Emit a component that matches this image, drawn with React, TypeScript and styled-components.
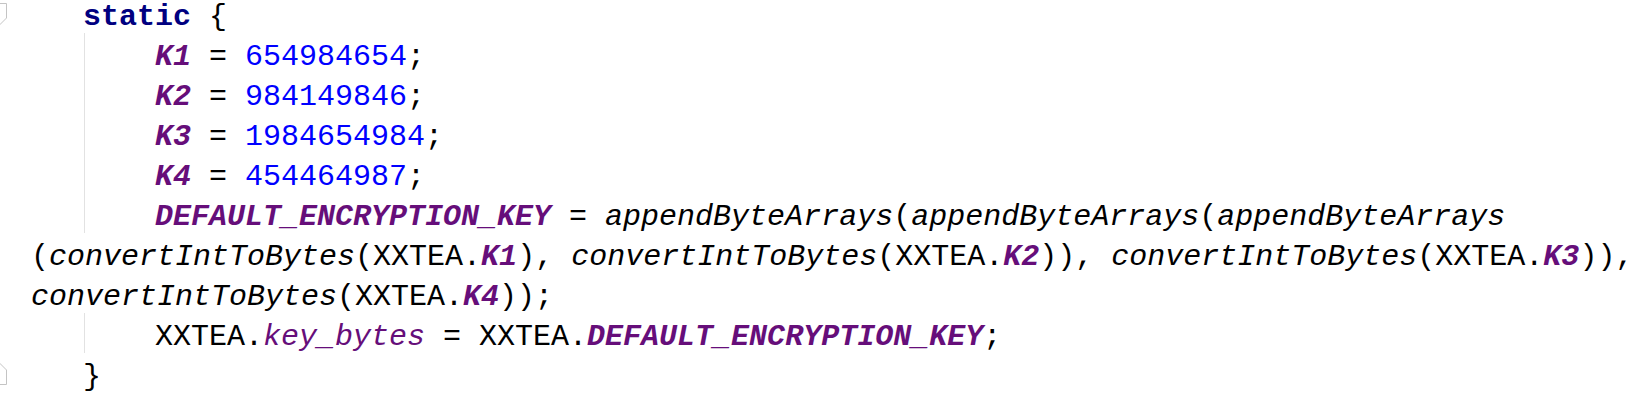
import React from "react";
import styled, { createGlobalStyle } from "styled-components";

const Global = createGlobalStyle`
  html, body { margin: 0; padding: 0; background: #ffffff; }
  body { overflow: hidden; }
`;

const Editor = styled.div`
  display: flex;
  flex-direction: column;
  margin-top: -3px;
  font-family: "Liberation Mono", "Courier New", monospace;
  font-size: 30px;
  line-height: 40px;
  color: #000000;
  background: #ffffff;
`;

const Line = styled.div<{ $guide?: boolean }>`
  position: relative;
  display: flex;
  height: 40px;
  white-space: pre;
  ${(p) =>
    p.$guide &&
    `&::before {
      content: "";
      position: absolute;
      left: 84px;
      top: -4px;
      height: 40px;
      width: 1px;
      background: #e2e2e2;
    }`}
`;

const Gutter = styled.div`
  width: 8px;
  flex: none;
  overflow: hidden;
  position: relative;
`;

const FoldIcon = styled.svg<{ $top: number }>`
  position: absolute;
  left: -7px;
  top: ${(p) => p.$top}px;
`;

const Code = styled.div<{ $indent: number }>`
  padding-left: ${(p) => p.$indent}px;
`;

const Kw = styled.span`
  color: #000080;
  font-weight: bold;
`;
const Const = styled.span`
  color: #660e7a;
  font-weight: bold;
  font-style: italic;
`;
const Field = styled.span`
  color: #660e7a;
  font-style: italic;
`;
const Num = styled.span`
  color: #0000ff;
`;
const Call = styled.span`
  font-style: italic;
`;

const BASE = 75;
const INNER = 147;
const WRAP = 23;

const FoldStart = () => (
  <FoldIcon $top={6} width="14" height="22" viewBox="0 0 14 22">
    <path d="M0.5 0.5 H13.5 V15 L7 21.5 L0.5 15 Z" fill="#ffffff" stroke="#c4c4c4" strokeWidth="1" />
  </FoldIcon>
);

const FoldEnd = () => (
  <FoldIcon $top={6} width="14" height="22" viewBox="0 0 14 22">
    <path d="M7 0.5 L13.5 7 V21.5 H0.5 V7 Z" fill="#ffffff" stroke="#c4c4c4" strokeWidth="1" />
  </FoldIcon>
);

export default function App() {
  return (
    <>
      <Global />
      <Editor>
        <Line>
          <Gutter>
            <FoldStart />
          </Gutter>
          <Code $indent={BASE}>
            <Kw>static</Kw> {"{"}
          </Code>
        </Line>
        <Line $guide>
          <Gutter />
          <Code $indent={INNER}>
            <Const>K1</Const> = <Num>654984654</Num>;
          </Code>
        </Line>
        <Line $guide>
          <Gutter />
          <Code $indent={INNER}>
            <Const>K2</Const> = <Num>984149846</Num>;
          </Code>
        </Line>
        <Line $guide>
          <Gutter />
          <Code $indent={INNER}>
            <Const>K3</Const> = <Num>1984654984</Num>;
          </Code>
        </Line>
        <Line $guide>
          <Gutter />
          <Code $indent={INNER}>
            <Const>K4</Const> = <Num>454464987</Num>;
          </Code>
        </Line>
        <Line $guide>
          <Gutter />
          <Code $indent={INNER}>
            <Const>DEFAULT_ENCRYPTION_KEY</Const> = <Call>appendByteArrays</Call>(
            <Call>appendByteArrays</Call>(<Call>appendByteArrays</Call>
          </Code>
        </Line>
        <Line>
          <Gutter />
          <Code $indent={WRAP}>
            (<Call>convertIntToBytes</Call>(XXTEA.<Const>K1</Const>), <Call>convertIntToBytes</Call>(XXTEA.
            <Const>K2</Const>)), <Call>convertIntToBytes</Call>(XXTEA.<Const>K3</Const>)),
          </Code>
        </Line>
        <Line>
          <Gutter />
          <Code $indent={WRAP}>
            <Call>convertIntToBytes</Call>(XXTEA.<Const>K4</Const>));
          </Code>
        </Line>
        <Line $guide>
          <Gutter />
          <Code $indent={INNER}>
            XXTEA.<Field>key_bytes</Field> = XXTEA.<Const>DEFAULT_ENCRYPTION_KEY</Const>;
          </Code>
        </Line>
        <Line>
          <Gutter>
            <FoldEnd />
          </Gutter>
          <Code $indent={BASE}>{"}"}</Code>
        </Line>
      </Editor>
    </>
  );
}
